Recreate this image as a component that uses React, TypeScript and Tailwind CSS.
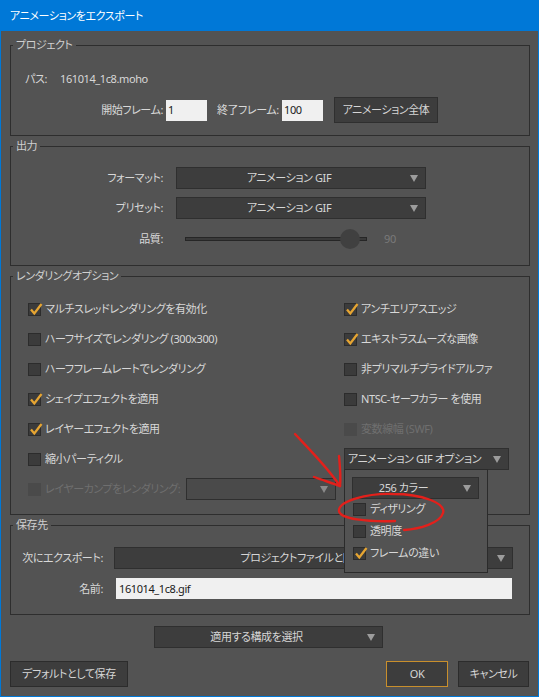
import type { ReactNode } from 'react';

const font =
  "font-['Noto_Sans','Noto_Sans_CJK_JP',sans-serif] [font-feature-settings:'palt'] tracking-[-0.4px] whitespace-nowrap";

function Caret({ dim }: { dim?: boolean }) {
  return (
    <svg width="8" height="7" viewBox="0 0 8 7" className="shrink-0">
      <polygon points="0,0 8,0 4,7" fill={dim ? '#8a8a8a' : '#9c9c9c'} />
    </svg>
  );
}

function Select({ text, className = '', disabled }: { text?: string; className?: string; disabled?: boolean }) {
  return (
    <div
      className={`flex h-[22px] items-center border border-[#2f2f2f] ${disabled ? 'bg-[#4a4a4a]' : 'bg-[#3d3d3d]'} ${className}`}
    >
      <span className="flex-1 overflow-hidden text-center text-[#d6d6d6]">{text}</span>
      <div className="flex w-[24px] shrink-0 pl-[9px]">
        <Caret dim={disabled} />
      </div>
    </div>
  );
}

function Box({ checked, disabled }: { checked?: boolean; disabled?: boolean }) {
  return (
    <span
      className={`relative block h-[13px] w-[13px] shrink-0 border ${
        disabled ? 'border-[#4a4a4a] bg-[#4a4a4a]' : 'border-[#2c2c2c] bg-[#3b3b3b]'
      }`}
    >
      {checked && (
        <svg width="15" height="14" viewBox="0 0 15 14" className="absolute -top-[2px] left-[0px]">
          <path d="M2 7.5 L5.3 11.5 L12.5 2" fill="none" stroke="#e6a532" strokeWidth="2.3" />
        </svg>
      )}
    </span>
  );
}

function Check({ label, checked, disabled }: { label: string; checked?: boolean; disabled?: boolean }) {
  return (
    <div className="flex h-[20px] items-center gap-[4px]">
      <Box checked={checked} disabled={disabled} />
      <span className={disabled ? 'text-[#6f6f6f]' : 'text-[#d8d8d8]'}>{label}</span>
    </div>
  );
}

function Group({ title, className, children }: { title: string; className: string; children: ReactNode }) {
  return (
    <fieldset className={`w-[520px] border border-[#2e2e2e] ${className}`}>
      <legend className="ml-[2px] px-[3px] leading-[20px] text-[#d0d0d0]">{title}</legend>
      {children}
    </fieldset>
  );
}

function Button({ children, className = '' }: { children: ReactNode; className?: string }) {
  return (
    <div className={`flex h-[26px] items-center justify-center border bg-[#3d3d3d] text-[#d6d6d6] ${className}`}>
      {children}
    </div>
  );
}

export default function App() {
  return (
    <div className={`relative flex h-[697px] w-[539px] flex-col bg-[#0078d7] text-[11px] leading-[20px] ${font}`}>
      <div className="flex h-[31px] shrink-0 items-center pl-[10px] text-white">アニメーションをエクスポート</div>

      <div className="mx-px mb-px flex flex-1 flex-col bg-[#535353] pl-[9px]">
        <Group title="プロジェクト" className="mt-[4px] h-[101px]">
          <div className="mt-[14px] flex h-[20px] items-center pl-[14px] text-[#d8d8d8]">
            <span className="w-[35px]">パス:</span>
            <span>161014_1c8.moho</span>
          </div>
          <div className="mt-[8px] flex items-center text-[#d8d8d8]">
            <span className="w-[152px] text-right">開始フレーム:</span>
            <div className="ml-[3px] flex h-[21px] w-[41px] items-center bg-[#f0f0f0] pl-[2px] text-[#1a1a1a]">1</div>
            <span className="ml-[10px] w-[63px]">終了フレーム:</span>
            <div className="ml-[2px] flex h-[21px] w-[41px] items-center bg-[#f0f0f0] pl-[2px] text-[#1a1a1a]">100</div>
            <Button className="ml-[11px] h-[22px] w-[104px] border-[#2f2f2f]">アニメーション全体</Button>
          </div>
        </Group>

        <Group title="出力" className="h-[130px]">
          <div className="mt-[11px] flex items-center">
            <span className="w-[152px] text-right text-[#d8d8d8]">フォーマット:</span>
            <Select text="アニメーション GIF" className="ml-[13px] w-[250px]" />
          </div>
          <div className="mt-[8px] flex items-center">
            <span className="w-[152px] text-right text-[#d8d8d8]">プリセット:</span>
            <Select text="アニメーション GIF" className="ml-[13px] w-[250px]" />
          </div>
          <div className="mt-[10px] flex h-[20px] items-center">
            <span className="w-[152px] text-right text-[#d8d8d8]">品質:</span>
            <div className="relative ml-[22px] h-[4px] w-[182px] border border-[#262626] bg-[#3a3a3a]">
              <div className="absolute -top-[9px] left-[154px] h-[20px] w-[20px] rounded-full bg-[#404040]" />
            </div>
            <span className="ml-[17px] text-[#7a7a7a]">90</span>
          </div>
        </Group>

        <Group title="レンダリングオプション" className="h-[249px]">
          <div className="mt-[13px] flex pl-[17px]">
            <div className="flex w-[316px] flex-col gap-[10px]">
              <Check label="マルチスレッドレンダリングを有効化" checked />
              <Check label="ハーフサイズでレンダリング (300x300)" />
              <Check label="ハーフフレームレートでレンダリング" />
              <Check label="シェイプエフェクトを適用" checked />
              <Check label="レイヤーエフェクトを適用" checked />
              <Check label="縮小パーティクル" />
              <div className="flex h-[20px] items-center">
                <Check label="レイヤーカンプをレンダリング:" disabled />
                <Select className="ml-auto mr-[8px] w-[150px]" disabled />
              </div>
            </div>
            <div className="flex flex-col gap-[10px]">
              <Check label="アンチエリアスエッジ" checked />
              <Check label="エキストラスムーズな画像" checked />
              <Check label="非プリマルチプライドアルファ" />
              <Check label="NTSC-セーフカラー を使用" />
              <Check label="変数線幅 (SWF)" disabled />
              <div className="relative z-10 -mt-[1px]">
                <Select text="アニメーション GIF オプション" className="w-[165px]" />
                <div className="absolute left-0 top-[21px] flex h-[104px] w-[144px] flex-col border border-[#2b2b2b] bg-[#535353] pl-[7px] pt-[7px]">
                  <Select text="256 カラー" className="w-[127px]" />
                  <div className="flex flex-col gap-[2px] pl-[1px]">
                    <Check label="ディザリング" />
                    <Check label="透明度" />
                    <Check label="フレームの違い" checked />
                  </div>
                </div>
              </div>
            </div>
          </div>
        </Group>

        <Group title="保存先" className="h-[100px]">
          <div className="mt-[12px] flex items-center">
            <span className="w-[92px] text-right text-[#d8d8d8]">次にエクスポート:</span>
            <Select text="プロジェクトファイルと同じ" className="ml-[11px] w-[399px]" />
          </div>
          <div className="mt-[9px] flex items-center">
            <span className="w-[92px] text-right text-[#d8d8d8]">名前:</span>
            <div className="ml-[13px] flex h-[21px] w-[396px] items-center bg-[#f0f0f0] pl-[3px] text-[#1a1a1a]">161014_1c8.gif</div>
          </div>
        </Group>

        <Select text="適用する構成を選択" className="ml-[144px] mt-[11px] w-[229px]" />

        <div className="mt-[13px] flex items-center">
          <Button className="w-[118px] border-[#2c2c2c]">デフォルトとして保存</Button>
          <Button className="ml-auto w-[62px] border-[#c98f2c]">OK</Button>
          <Button className="ml-[10px] mr-[9px] w-[71px] border-[#2c2c2c]">キャンセル</Button>
        </div>
      </div>

      <svg className="pointer-events-none absolute left-0 top-0 z-20" width="539" height="697" viewBox="0 0 539 697">
        <g fill="none" stroke="#e3201b" strokeLinecap="round" strokeWidth="2.4">
          <path d="M295 434 C 312 452, 328 468, 340 486" />
          <path d="M339 456 C 340 466, 341 476, 340 486" />
          <path d="M314 477 C 322 480, 332 483, 340 486" />
          <path d="M395 521 C 368 522, 340 519, 339 511 C 338 501, 368 493, 393 494 C 422 494, 446 503, 443 513 C 440 523, 420 529, 404 530" />
        </g>
      </svg>
    </div>
  );
}
